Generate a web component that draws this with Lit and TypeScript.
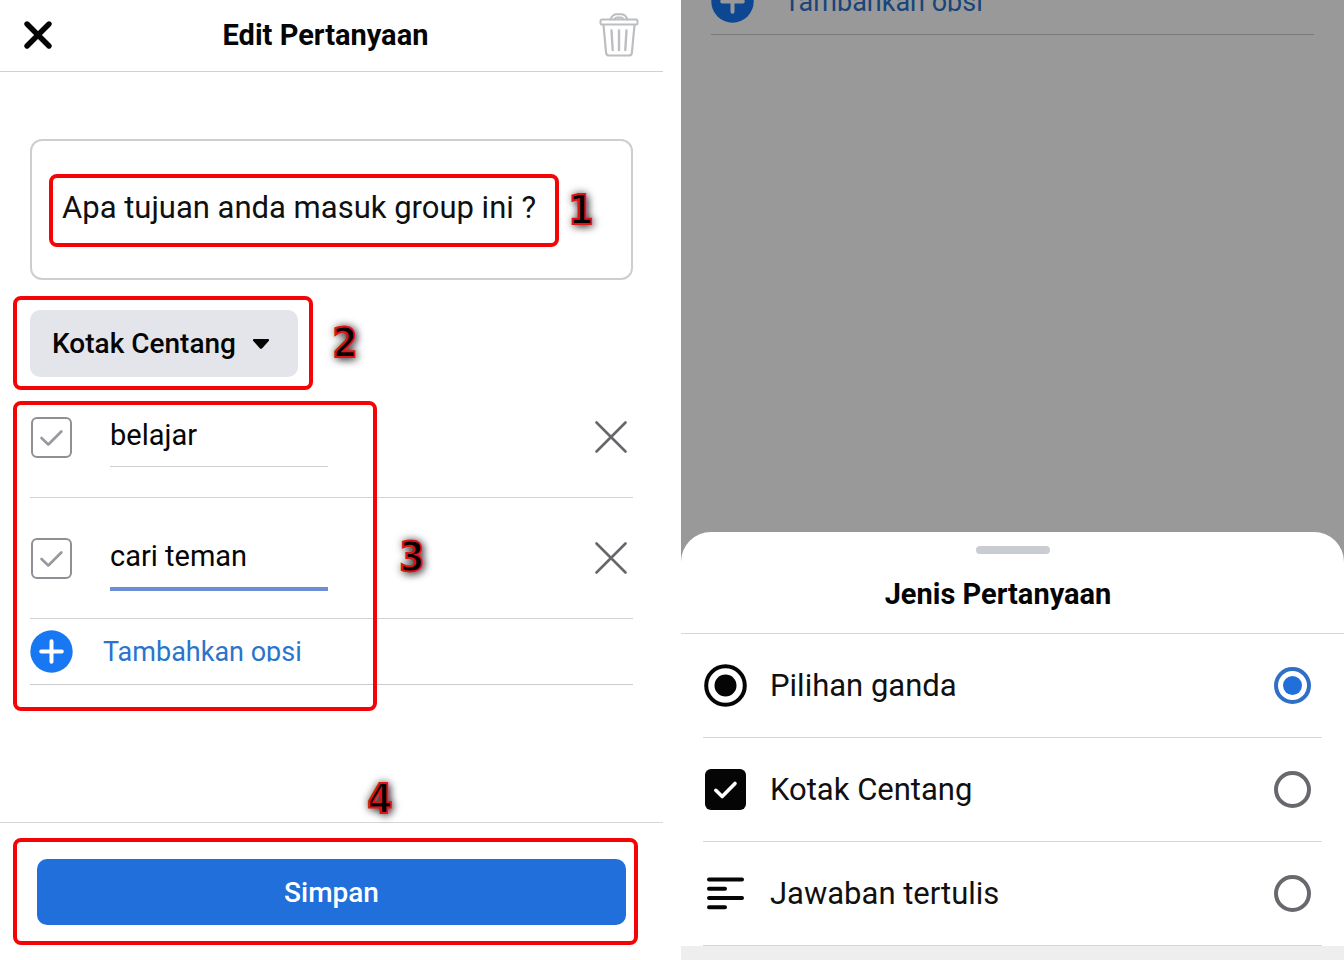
import { LitElement, html, svg, css } from "lit";
import { customElement, property, state } from "lit/decorators.js";

const base = css`
  *, *::before, *::after { box-sizing: border-box; }
  button, input, select { font: inherit; color: inherit; margin: 0; border: 0; padding: 0; background: none; }
  button, select { cursor: pointer; }
  svg { display: block; }
  h1, h2, ul { margin: 0; padding: 0; list-style: none; }
`;

/** Numbered red frame that marks a step of the guide. */
const markerStyles = css`
  .frame {
    position: absolute;
    border: 4px solid #f40404;
    border-radius: 8px;
    pointer-events: none;
  }
  .step {
    position: absolute;
    width: 28px;
    text-align: center;
    font: 700 40px/40px "DejaVu Sans Condensed", "DejaVu Sans", sans-serif;
    color: #000;
    -webkit-text-stroke: 2px #e01414;
    text-shadow: 2px 2px 8px rgba(0, 0, 0, 0.8), 0 0 10px rgba(0, 0, 0, 0.6);
    pointer-events: none;
  }
`;

@customElement("add-option")
class AddOption extends LitElement {
  static styles = [base, css`
    :host { display: block; }
    .add {
      display: flex;
      align-items: center;
      gap: 30px;
      width: 100%;
      height: 66px;
      text-align: left;
      border-bottom: 1px solid #c9cccf;
      color: #2a74cc;
    }
    .label {
      font-size: 27px;
      line-height: 20px;
      height: 20px;
      clip-path: inset(-8px 0 0 0);
    }
  `];

  render() {
    return html`
      <button class="add" type="button">
        <svg width="43" height="43" viewBox="0 0 43 43" aria-hidden="true">
          <circle cx="21.5" cy="21.5" r="21.2" fill="#1877f2" />
          <path d="M21.5 11.2v20.6M11.2 21.5h20.6" stroke="#fff" stroke-width="4" stroke-linecap="round" />
        </svg>
        <span class="label">Tambahkan opsi</span>
      </button>
    `;
  }
}

@customElement("question-editor")
class QuestionEditor extends LitElement {
  @state() private options = [
    { text: "belajar", active: false },
    { text: "cari teman", active: true },
  ];

  static styles = [base, markerStyles, css`
    :host { display: flex; flex-direction: column; background: #fff; }
    .header {
      display: grid;
      grid-template-columns: 44px 1fr 56px;
      align-items: center;
      height: 72px;
      padding: 0 16px 2px;
      border-bottom: 1px solid #cfd0d2;
    }
    .header h1 { font-size: 29px; line-height: 40px; font-weight: 700; text-align: center; }
    .icon { display: grid; place-items: center; height: 44px; }
    .body { padding: 67px 30px 40px; }
    .question {
      position: relative;
      display: flex;
      align-items: center;
      height: 141px;
      padding: 0 30px 4px;
      border: 2px solid #ccced0;
      border-radius: 12px;
    }
    .question input {
      width: 100%;
      height: 60px;
      font-size: 31px;
      color: #101010;
      outline: 0;
    }
    .frame-question { top: 33px; right: 72px; bottom: 31px; left: 17px; }
    .step-question { top: 49px; right: 36px; }

    .kind { position: relative; display: inline-grid; margin-top: 30px; vertical-align: top; }
    .kind select {
      grid-area: 1 / 1;
      appearance: none;
      field-sizing: content;
      height: 67px;
      padding: 0 62px 0 22px;
      border-radius: 10px;
      background: #e4e5ea;
      font-size: 28px;
      font-weight: 500;
    }
    .kind svg { grid-area: 1 / 1; place-self: center end; margin-right: 28px; pointer-events: none; }
    .frame-kind { inset: -14px -15px -13px -17px; }
    .step-kind { top: 13px; left: calc(100% + 33px); }

    .options { position: relative; }
    .option {
      display: flex;
      align-items: center;
      height: 121px;
      border-bottom: 1px solid #d2d3d5;
    }
    .tick { display: grid; margin-left: 1px; }
    .tick input {
      grid-area: 1 / 1;
      appearance: none;
      width: 41px;
      height: 41px;
      border: 2px solid #8d9095;
      border-radius: 6px;
    }
    .tick svg { grid-area: 1 / 1; pointer-events: none; }
    .answer {
      align-self: flex-start;
      width: 218px;
      margin: 38px auto 0 38px;
      padding-bottom: 11px;
      border-bottom: 1px solid #d0d1d3;
      font-size: 29px;
      line-height: 40px;
    }
    .answer input { display: block; width: 100%; height: 40px; line-height: 40px; outline: 0; }
    .answer.active { border-bottom: 4px solid #6c90d8; }
    .remove { display: grid; place-items: center; width: 44px; height: 44px; }
    .frame-options { top: 24px; bottom: -26px; left: -17px; width: 364px; }
    .step-options { top: 160px; left: 368px; }

    .footer {
      position: relative;
      margin-top: auto;
      padding: 36px 37px 35px;
      border-top: 1px solid #d6d7d9;
    }
    .save {
      display: block;
      width: 100%;
      height: 66px;
      border-radius: 10px;
      background: #216fdb;
      color: #fff;
      font-size: 28px;
      font-weight: 500;
    }
    .frame-save { top: 15px; right: 25px; bottom: 15px; left: 13px; }
    .step-save { bottom: 141px; left: 366px; }
  `];

  render() {
    return html`
      <header class="header">
        <button class="icon" type="button" aria-label="Tutup">
          <svg width="30" height="30" viewBox="0 0 30 30">
            <path d="M4 4l22 22M26 4L4 26" stroke="#050505" stroke-width="5.4" stroke-linecap="round" />
          </svg>
        </button>
        <h1>Edit Pertanyaan</h1>
        <button class="icon" type="button" aria-label="Hapus">
          <svg width="40" height="44" viewBox="0 0 40 44" fill="none" stroke="#bcbec2" stroke-width="2" stroke-linejoin="round" stroke-linecap="round">
            <rect x="1.5" y="6.500" width="37" height="5" rx="1.5" />
            <path d="M11.500 6.500c1-2.600 3-4.900 5.500-5.200h6c2.500.3 4.500 2.600 5.500 5.200M15.500 6.300c.8-1.300 1.500-1.700 2.500-1.700h4c1 0 1.700.4 2.500 1.700" />
            <path d="M4.500 12l2.600 27.800q.3 2.700 3 2.700h19.800q2.700 0 3-2.700L35.500 12" stroke-width="2.200" />
            <path d="M12.500 17.500l1.200 19.500M20 17.500v19.500M27.500 17.500l-1.200 19.500" stroke-width="2.400" />
          </svg>
        </button>
      </header>

      <main class="body">
        <div class="question">
          <input type="text" aria-label="Pertanyaan" .value=${"Apa tujuan anda masuk group ini ?"} />
          <span class="frame frame-question"></span>
          <span class="step step-question">1</span>
        </div>

        <div class="kind">
          <select aria-label="Jenis pertanyaan">
            <option>Pilihan ganda</option>
            <option selected>Kotak Centang</option>
            <option>Jawaban tertulis</option>
          </select>
          <svg width="18" height="12" viewBox="0 0 18 12" aria-hidden="true">
            <path d="M2.200 1h13.600c1.200 0 1.600 1.200.9 2L10.200 10.200c-.7.800-1.700.8-2.400 0L1.300 3C.6 2.200 1 1 2.200 1z" fill="#050505" />
          </svg>
          <span class="frame frame-kind"></span>
          <span class="step step-kind">2</span>
        </div>

        <div class="options">
          ${this.options.map((o) => html`
            <div class="option">
              <label class="tick">
                <input type="checkbox" aria-label="Pilih ${o.text}" />
                <svg width="41" height="41" viewBox="0 0 41 41" aria-hidden="true">
                  <path d="M10.500 21l6.800 6.500L30.300 14.500" fill="none" stroke="#96999e" stroke-width="2.600" stroke-linecap="round" stroke-linejoin="round" />
                </svg>
              </label>
              <div class="answer ${o.active ? "active" : ""}">
                <input type="text" aria-label="Opsi" .value=${o.text} />
              </div>
              <button class="remove" type="button" aria-label="Hapus ${o.text}">
                <svg width="34" height="34" viewBox="0 0 34 34">
                  <path d="M2.500 2.500l29 29M31.500 2.500l-29 29" stroke="#65676b" stroke-width="2.600" stroke-linecap="round" />
                </svg>
              </button>
            </div>
          `)}
          <add-option></add-option>
          <span class="frame frame-options"></span>
          <span class="step step-options">3</span>
        </div>
      </main>

      <footer class="footer">
        <button class="save" type="button">Simpan</button>
        <span class="frame frame-save"></span>
        <span class="step step-save">4</span>
      </footer>
    `;
  }
}

const kindIcons = {
  radio: svg`
    <circle cx="21.500" cy="21.500" r="19.300" fill="none" stroke="#050505" stroke-width="4" />
    <circle cx="21.500" cy="21.500" r="11" fill="#050505" />`,
  check: svg`
    <rect x="1" y="1" width="41" height="41" rx="6" fill="#050505" />
    <path d="M11.800 22.300l6.400 6.200L31 15.500" fill="none" stroke="#fff" stroke-width="3.600" stroke-linecap="round" stroke-linejoin="round" />`,
  text: svg`
    <path d="M5 7.500h33M5 16.700h16M5 26h33M5 35.200h16" fill="none" stroke="#050505" stroke-width="4" stroke-linecap="round" />`,
};

@customElement("kind-sheet")
class KindSheet extends LitElement {
  @property() value = "Pilihan ganda";

  private kinds: { name: string; icon: keyof typeof kindIcons }[] = [
    { name: "Pilihan ganda", icon: "radio" },
    { name: "Kotak Centang", icon: "check" },
    { name: "Jawaban tertulis", icon: "text" },
  ];

  static styles = [base, css`
    :host { position: relative; display: flex; flex-direction: column; overflow: hidden; background: #fff; }
    .behind { flex: 1; margin-top: -31px; padding: 0 30px; }
    .scrim { position: absolute; inset: 0; background: rgba(0, 0, 0, 0.4); }
    .sheet { position: relative; border-radius: 30px 30px 0 0; background: #fff; }
    .head { height: 102px; padding: 14px 29px 0 0; border-bottom: 1px solid #d6d7d9; }
    .grip { width: 74px; height: 8px; margin: 0 auto; border-radius: 4px; background: #c9ccd1; }
    .grip-line { margin-right: -29px; }
    .head h2 { margin-top: 20px; font-size: 29px; line-height: 40px; font-weight: 700; text-align: center; }
    .kinds { padding: 0 22px; }
    .kind {
      display: flex;
      align-items: center;
      gap: 23px;
      height: 104px;
      padding: 0 11px 0 1px;
      border-bottom: 1px solid #d6d7d9;
      font-size: 31px;
      color: #101010;
      cursor: pointer;
    }
    .kind input {
      appearance: none;
      display: grid;
      place-items: center;
      width: 37px;
      height: 37px;
      margin-left: auto;
      border: 4px solid #67696d;
      border-radius: 50%;
    }
    .kind input:checked { border-color: #2f6fc6; }
    .kind input:checked::before {
      content: "";
      width: 19px;
      height: 19px;
      border-radius: 50%;
      background: #216fdb;
    }
    .nav { position: relative; height: 14px; background: #eeeeee; }
  `];

  render() {
    return html`
      <div class="behind"><add-option></add-option></div>
      <div class="scrim"></div>
      <section class="sheet">
        <div class="head">
          <div class="grip-line"><div class="grip"></div></div>
          <h2>Jenis Pertanyaan</h2>
        </div>
        <div class="kinds">
          ${this.kinds.map((k) => html`
            <label class="kind">
              <svg width="43" height="43" viewBox="0 0 43 43" aria-hidden="true">${kindIcons[k.icon]}</svg>
              <span>${k.name}</span>
              <input type="radio" name="kind" .checked=${k.name === this.value} />
            </label>
          `)}
        </div>
      </section>
      <div class="nav"></div>
    `;
  }
}

@customElement("app-root")
class AppRoot extends LitElement {
  static styles = css`
    :host {
      display: grid;
      grid-template-columns: 1fr 1fr;
      gap: 18px;
      min-height: 100vh;
      background: #fff;
      color: #050505;
      font-family: Roboto, "Liberation Sans", sans-serif;
    }
  `;

  render() {
    return html`
      <question-editor></question-editor>
      <kind-sheet></kind-sheet>
    `;
  }
}
